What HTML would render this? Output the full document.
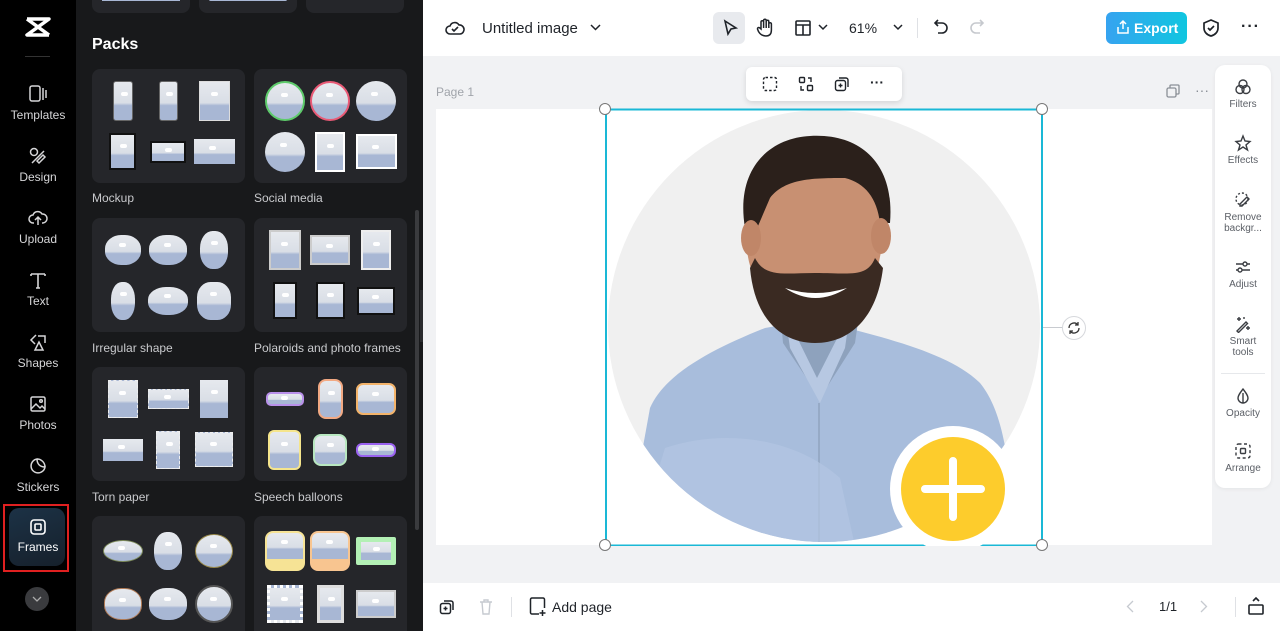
<!DOCTYPE html>
<html style="width:1280px;height:631px;overflow:hidden"><head><meta charset="utf-8"><style>
*{box-sizing:border-box;margin:0;padding:0}
body{width:1280px;height:631px;overflow:hidden;font-family:"Liberation Sans",sans-serif;background:#fff;position:relative}
.abs{position:absolute}
#rail{left:0;top:0;width:76px;height:631px;background:#000}
#panel{left:76px;top:0;width:347px;height:631px;background:#18191b}
.ri{position:absolute;left:0;width:76px;text-align:center;color:#d6d6d8;font-size:12px}
.ri svg{display:block;margin:0 auto 4px}
.card{position:absolute;width:153px;height:114px;background:#25262a;border-radius:8px;display:grid;grid-template-columns:repeat(3,1fr);grid-template-rows:1fr 1fr;padding:6px 8px;align-items:center;justify-items:center}
.lbl{position:absolute;color:#c9cacd;font-size:12px}
.t{background:linear-gradient(180deg,#e6e9ee 0%,#d9dee6 55%,#a8b7d4 62%,#a8b7d4 100%);position:relative}
.t::after{content:"";position:absolute;left:38%;top:28%;width:7px;height:4px;background:#fff;border-radius:3px}
#main{left:423px;top:0;width:857px;height:631px;background:#f1f2f4}
#top{left:423px;top:0;width:857px;height:56px;background:#fff}
#bot{left:423px;top:583px;width:857px;height:48px;background:#fff}
.tx{color:#1f2329}
.rp{position:absolute;left:0;width:56px;text-align:center;font-size:10px;color:#5b5f66;line-height:11px}
.rp svg{display:block;margin:0 auto 3px}
</style></head><body>
<div id="rail" class="abs">
  <svg class="abs" style="left:24px;top:16px" width="28" height="22" viewBox="0 0 28 22"><path d="M3 3h22L3 19h22M3 3l22 16M25 3L3 19" stroke="#fff" stroke-width="3.5" fill="none" stroke-linejoin="round"/></svg>
  <div class="abs" style="left:25px;top:56px;width:25px;height:1px;background:#333"></div>
  <div class="ri" style="top:84px"><svg width="20" height="20" viewBox="0 0 20 20" fill="none" stroke="#d6d6d8" stroke-width="1.5"><rect x="2" y="2" width="10" height="15" rx="2"/><path d="M15 4v12M18 6v8"/></svg>Templates</div>
  <div class="ri" style="top:146px"><svg width="20" height="20" viewBox="0 0 20 20" fill="none" stroke="#d6d6d8" stroke-width="1.5"><circle cx="6" cy="6" r="3.5"/><path d="M4 17l12-12M9 15l6-6 2 2-6 6z"/></svg>Design</div>
  <div class="ri" style="top:208px"><svg width="20" height="20" viewBox="0 0 20 20" fill="none" stroke="#d6d6d8" stroke-width="1.5"><path d="M6 15H5a4 4 0 010-8 5 5 0 019-1 4 4 0 011 9h-1M10 17V9M7 12l3-3 3 3"/></svg>Upload</div>
  <div class="ri" style="top:270px"><svg width="20" height="20" viewBox="0 0 20 20" fill="none" stroke="#d6d6d8" stroke-width="1.6"><path d="M3 4h14M10 4v14M3 4v2M17 4v2M8 18h4"/></svg>Text</div>
  <div class="ri" style="top:332px"><svg width="20" height="20" viewBox="0 0 20 20" fill="none" stroke="#d6d6d8" stroke-width="1.5"><path d="M8 3L3 8l4 4M10 4h7v7M11 10l-4 8h8z"/></svg>Shapes</div>
  <div class="ri" style="top:394px"><svg width="20" height="20" viewBox="0 0 20 20" fill="none" stroke="#d6d6d8" stroke-width="1.5"><rect x="3" y="3" width="14" height="14" rx="1.5"/><path d="M3 15l5-5 4 4 2-2 3 3"/><circle cx="13" cy="7" r="1.3"/></svg>Photos</div>
  <div class="ri" style="top:456px"><svg width="20" height="20" viewBox="0 0 20 20" fill="none" stroke="#d6d6d8" stroke-width="1.5"><path d="M17 11a7 7 0 11-8-8c0 5 3 8 8 8zM9 3a8 8 0 018 8"/></svg>Stickers</div>
  <div class="abs" style="left:3px;top:504px;width:66px;height:68px;border:2px solid #e02020"></div>
  <div class="abs" style="left:9px;top:508px;width:56px;height:58px;border-radius:10px;background:linear-gradient(160deg,#1c3246,#16202b)"></div>
  <div class="ri" style="top:518px;color:#fff"><svg width="18" height="18" viewBox="0 0 18 18" fill="none" stroke="#fff" stroke-width="1.6"><rect x="2" y="2" width="14" height="14" rx="3"/><rect x="6" y="6" width="6" height="6" rx="1"/></svg>Frames</div>
  <div class="abs" style="left:25px;top:587px;width:24px;height:24px;border-radius:50%;background:#3a3b3e"></div>
  <svg class="abs" style="left:32px;top:596px" width="10" height="6"><path d="M1 1l4 4 4-4" stroke="#aaa" fill="none" stroke-width="1.3"/></svg>
</div>
<div id="panel" class="abs">
  <div class="abs" style="left:16px;top:-8px;width:98px;height:21px;background:#25262a;border-radius:8px"></div>
  <div class="abs" style="left:123px;top:-8px;width:98px;height:21px;background:#25262a;border-radius:8px"></div>
  <div class="abs" style="left:230px;top:-8px;width:98px;height:21px;background:#25262a;border-radius:8px"></div>
  <div class="abs" style="left:26px;top:-2px;width:78px;height:3px;background:#a8b7d4"></div>
  <div class="abs" style="left:133px;top:-2px;width:78px;height:3px;background:#a8b7d4;border-radius:3px"></div>
  <div class="abs" style="left:16px;top:36px;color:#fff;font-weight:bold;font-size:16px">Packs</div>
  <div class="abs" style="left:339px;top:210px;width:4px;height:320px;background:#3a3b3e;border-radius:2px"></div>
</div>
<div class="card" style="left:92px;top:69px"><div class="t" style="width:20px;height:40px;border-radius:3px;border:1px solid #666"></div><div class="t" style="width:19px;height:40px;border-radius:3px;border:1px solid #666"></div><div class="t" style="width:31px;height:40px;border:1px solid #ddd"></div><div class="t" style="width:27px;height:37px;border:2px solid #111"></div><div class="t" style="width:36px;height:22px;border:2px solid #111"></div><div class="t" style="width:41px;height:25px"></div></div>
<div class="lbl" style="left:92px;top:191px">Mockup</div>
<div class="card" style="left:254px;top:69px"><div class="t" style="width:40px;height:40px;border-radius:50%;border:2px solid #5ecb6b"></div><div class="t" style="width:40px;height:40px;border-radius:50%;border:2px solid #e95a76"></div><div class="t" style="width:40px;height:40px;border-radius:50%"></div><div class="t" style="width:40px;height:40px;border-radius:50%"></div><div class="t" style="width:30px;height:40px;border:2px solid #fff"></div><div class="t" style="width:41px;height:35px;border:2px solid #fff"></div></div>
<div class="lbl" style="left:254px;top:191px">Social media</div>
<div class="card" style="left:92px;top:218px"><div class="t" style="width:36px;height:30px;border-radius:45%"></div><div class="t" style="width:38px;height:30px;border-radius:45%"></div><div class="t" style="width:28px;height:38px;border-radius:45%"></div><div class="t" style="width:24px;height:38px;border-radius:45%"></div><div class="t" style="width:40px;height:28px;border-radius:45%"></div><div class="t" style="width:34px;height:38px;border-radius:40%"></div></div>
<div class="lbl" style="left:92px;top:341px">Irregular shape</div>
<div class="card" style="left:254px;top:218px"><div class="t" style="width:32px;height:40px;border:2px solid #ccc"></div><div class="t" style="width:40px;height:30px;border:2px solid #ccc"></div><div class="t" style="width:30px;height:40px;border:2px solid #eee"></div><div class="t" style="width:24px;height:37px;border:2px solid #111"></div><div class="t" style="width:29px;height:37px;border:2px solid #111"></div><div class="t" style="width:38px;height:28px;border:2px solid #111"></div></div>
<div class="lbl" style="left:254px;top:341px">Polaroids and photo frames</div>
<div class="card" style="left:92px;top:367px"><div class="t" style="width:30px;height:38px;border:1px dashed #eee"></div><div class="t" style="width:41px;height:20px;border:1px dashed #eee"></div><div class="t" style="width:28px;height:38px"></div><div class="t" style="width:40px;height:22px"></div><div class="t" style="width:24px;height:38px;border:1px dashed #eee"></div><div class="t" style="width:38px;height:35px;border:1px dashed #eee"></div></div>
<div class="lbl" style="left:92px;top:490px">Torn paper</div>
<div class="card" style="left:254px;top:367px"><div class="t" style="width:38px;height:14px;border-radius:5px;border:2px solid #b990ea"></div><div class="t" style="width:25px;height:40px;border-radius:8px;border:2px solid #f2a983"></div><div class="t" style="width:40px;height:32px;border-radius:7px;border:2px solid #f3b36a"></div><div class="t" style="width:33px;height:40px;border-radius:6px;border:2px solid #f5e58c"></div><div class="t" style="width:34px;height:32px;border-radius:8px;border:2px solid #b8e7c0"></div><div class="t" style="width:40px;height:14px;border-radius:6px;border:2px solid #9a62f0"></div></div>
<div class="lbl" style="left:254px;top:490px">Speech balloons</div>
<div class="card" style="left:92px;top:516px;height:115px;border-radius:8px 8px 0 0;padding:8px 8px 0"><div class="t" style="width:40px;height:22px;border-radius:50%;border:1px solid #7c8a5a"></div><div class="t" style="width:28px;height:38px;border-radius:45%"></div><div class="t" style="width:38px;height:34px;border-radius:50%;border:1px solid #9a8a4a"></div><div class="t" style="width:38px;height:32px;border-radius:45%;border:1px solid #b07a55"></div><div class="t" style="width:38px;height:32px;border-radius:45%"></div><div class="t" style="width:38px;height:38px;border-radius:50%;border:2px solid #555"></div></div>
<div class="card" style="left:254px;top:516px;height:115px;border-radius:8px 8px 0 0;padding:8px 8px 0"><div class="t" style="width:40px;height:40px;border-radius:8px;border:2px solid #f6e395;border-bottom:12px solid #f6e395"></div><div class="t" style="width:40px;height:40px;border-radius:8px;border:2px solid #f8c590;border-bottom:12px solid #f8c590"></div><div class="t" style="width:40px;height:28px;border:5px solid #b3f0b5;border-radius:2px"></div><div class="t" style="width:36px;height:38px;border:3px dotted #fff"></div><div class="t" style="width:27px;height:38px;border:3px solid #ddd"></div><div class="t" style="width:40px;height:28px;border:2px solid #ccc"></div></div>
<div class="abs" style="left:420px;top:290px;width:9px;height:52px;background:#2a2b2e;border-radius:0 6px 6px 0"></div>
<div id="main" class="abs"></div>
<div id="top" class="abs">
  <svg class="abs" style="left:22px;top:18px" width="20" height="20" viewBox="0 0 20 20" fill="none" stroke="#1f2329" stroke-width="1.6"><path d="M6 16H5a4 4 0 010-8 5 5 0 019-1 4 4 0 011 9H6z"/><path d="M7 11l2 2 4-4"/></svg>
  <div class="abs tx" style="left:59px;top:20px;font-size:15px">Untitled image</div>
  <svg class="abs" style="left:167px;top:24px" width="11" height="7"><path d="M1 1l4.5 4.5L10 1" stroke="#1f2329" fill="none" stroke-width="1.5"/></svg>
  <div class="abs" style="left:290px;top:12px;width:32px;height:32px;background:#e8eaee;border-radius:6px"></div>
  <svg class="abs" style="left:298px;top:19px" width="18" height="18" viewBox="0 0 18 18" fill="none" stroke="#1f2329" stroke-width="1.6"><path d="M4 2l11 7-5 1-3 5z"/></svg>
  <svg class="abs" style="left:333px;top:18px" width="18" height="20" viewBox="0 0 18 20" fill="none" stroke="#1f2329" stroke-width="1.5"><path d="M5 11V4a1.3 1.3 0 012.6 0v6V2.5a1.3 1.3 0 012.6 0V10V3.5a1.3 1.3 0 012.6 0V10V6a1.3 1.3 0 012.6 0v6c0 4-2 6-5.5 6S4 16 2.5 13.5L1.5 11a1.3 1.3 0 012.3-1z"/></svg>
  <svg class="abs" style="left:371px;top:19px" width="18" height="18" viewBox="0 0 18 18" fill="none" stroke="#1f2329" stroke-width="1.6"><rect x="2" y="2" width="14" height="14" rx="1"/><path d="M2 6h14M9 6v10"/></svg>
  <svg class="abs" style="left:395px;top:24px" width="10" height="7"><path d="M1 1l4 4 4-4" stroke="#1f2329" fill="none" stroke-width="1.5"/></svg>
  <div class="abs tx" style="left:426px;top:20px;font-size:14px">61%</div>
  <svg class="abs" style="left:470px;top:24px" width="10" height="7"><path d="M1 1l4 4 4-4" stroke="#1f2329" fill="none" stroke-width="1.5"/></svg>
  <div class="abs" style="left:494px;top:18px;width:1px;height:20px;background:#dfe1e5"></div>
  <svg class="abs" style="left:509px;top:18px" width="18" height="18" viewBox="0 0 18 18" fill="none" stroke="#1f2329" stroke-width="1.6"><path d="M6 2L3 5l3 3M3 5h7a5 5 0 010 10H6"/></svg>
  <svg class="abs" style="left:545px;top:18px" width="18" height="18" viewBox="0 0 18 18" fill="none" stroke="#c6c9ce" stroke-width="1.6"><path d="M12 2l3 3-3 3M15 5H8a5 5 0 000 10h4"/></svg>
  <div class="abs" style="left:683px;top:12px;width:81px;height:32px;border-radius:6px;background:linear-gradient(90deg,#36a3f0,#10c6e0);color:#fff;font-size:14px;font-weight:bold;padding:8px 0 0 28px">Export</div>
  <svg class="abs" style="left:693px;top:19px" width="14" height="16" viewBox="0 0 14 16" fill="none" stroke="#fff" stroke-width="1.5"><path d="M7 10V2M4 5l3-3 3 3M2 8v6h10V8"/></svg>
  <svg class="abs" style="left:779px;top:18px" width="18" height="20" viewBox="0 0 18 20" fill="none" stroke="#1f2329" stroke-width="1.7"><path d="M9 2l7 3v5c0 4-3 7-7 8-4-1-7-4-7-8V5z"/><path d="M6 10l2 2 4-4"/></svg>
  <div class="abs tx" style="left:818px;top:18px;font-size:16px;font-weight:bold;letter-spacing:1px">···</div>
</div>
<div class="abs" style="left:436px;top:85px;color:#a0a4aa;font-size:12px">Page 1</div>
<svg class="abs" style="left:1166px;top:84px" width="14" height="14" viewBox="0 0 14 14" fill="none" stroke="#8a8f96" stroke-width="1.3"><rect x="1" y="4" width="9" height="9" rx="1.5"/><path d="M4 4V2a1 1 0 011-1h7a1 1 0 011 1v7a1 1 0 01-1 1h-2"/></svg>
<div class="abs" style="left:1195px;top:82px;color:#8a8f96;font-size:14px">···</div>
<div class="abs" style="left:436px;top:109px;width:776px;height:436px;background:#fff"></div>
<svg class="abs" style="left:605px;top:108px" width="438" height="438" viewBox="0 0 438 438">
<defs><clipPath id="c"><circle cx="219" cy="218" r="216"/></clipPath></defs>
<g clip-path="url(#c)">
<rect width="438" height="438" fill="#f0f0f0"/>
<path d="M20 438 L45 300 C60 265 110 240 160 220 L205 212 L250 222 C300 235 350 250 375 275 C395 300 405 340 410 438Z" fill="#a8bddc"/>
<path d="M175 200 L178 235 L215 290 L250 235 L255 200Z" fill="#8ea2bd"/>
<path d="M180 205 L212 270 L245 205 L240 240 L215 295 L185 240Z" fill="#b7c8e2"/>
<path d="M214 295 L214 438" stroke="#96aac6" stroke-width="2"/>
<path d="M60 340 C120 320 190 330 235 370 L250 438 L30 438Z" fill="#b3c6e2" opacity=".7"/>
<ellipse cx="209" cy="128" rx="68" ry="88" fill="#c89072"/>
<path d="M145 160 C150 215 180 235 210 235 C245 235 272 210 278 160 L270 150 C262 170 245 165 210 165 C180 165 160 170 150 150Z" fill="#3a2a22"/>
<path d="M180 180 Q210 200 242 180 Q210 190 180 180Z" fill="#fff"/>
<path d="M140 120 C130 60 165 30 205 28 C255 25 290 55 285 115 L275 115 C272 90 260 75 240 70 C210 70 180 70 165 90 L150 125Z" fill="#2b201b"/>
<ellipse cx="146" cy="130" rx="10" ry="18" fill="#c08668"/>
<ellipse cx="276" cy="128" rx="10" ry="18" fill="#c08668"/>
</g>
<rect x="1" y="1.5" width="436" height="436" fill="none" stroke="#1ab8d6" stroke-width="2"/>
<circle cx="348" cy="381" r="63" fill="#fff"/>
<circle cx="348" cy="381" r="52" fill="#fdcc2c"/>
<path d="M348 353v56M320 381h56" stroke="#fff" stroke-width="8" stroke-linecap="round"/>
</svg>
<div class="abs" style="left:599px;top:103px;width:12px;height:12px;border-radius:50%;background:#fff;border:1px solid #777"></div>
<div class="abs" style="left:1036px;top:103px;width:12px;height:12px;border-radius:50%;background:#fff;border:1px solid #777"></div>
<div class="abs" style="left:599px;top:539px;width:12px;height:12px;border-radius:50%;background:#fff;border:1px solid #777"></div>
<div class="abs" style="left:1036px;top:539px;width:12px;height:12px;border-radius:50%;background:#fff;border:1px solid #777"></div>
<div class="abs" style="left:1043px;top:327px;width:20px;height:1px;background:#c8cbd0"></div>
<div class="abs" style="left:1062px;top:316px;width:24px;height:24px;border-radius:50%;background:#fff;border:1px solid #d6d8dc"></div>
<svg class="abs" style="left:1067px;top:321px" width="14" height="14" viewBox="0 0 14 14" fill="none" stroke="#333" stroke-width="1.3"><path d="M2 7a5 5 0 019-3M12 7a5 5 0 01-9 3M11 1v3H8M3 13v-3h3"/></svg>
<div class="abs" style="left:746px;top:67px;width:156px;height:34px;background:#fff;border-radius:6px;box-shadow:0 2px 6px rgba(0,0,0,.12)"></div>
<svg class="abs" style="left:762px;top:76px" width="16" height="16" viewBox="0 0 16 16" fill="none" stroke="#1f2329" stroke-width="1.4" stroke-dasharray="2.5 2"><rect x="1.5" y="1.5" width="13" height="13" rx="2"/></svg>
<svg class="abs" style="left:798px;top:76px" width="16" height="16" viewBox="0 0 16 16" fill="none" stroke="#1f2329" stroke-width="1.4"><rect x="1.5" y="1.5" width="5" height="5" rx="1"/><rect x="9.5" y="9.5" width="5" height="5" rx="1"/><path d="M10 2h3v4M6 14H3v-4"/></svg>
<svg class="abs" style="left:834px;top:76px" width="16" height="16" viewBox="0 0 16 16" fill="none" stroke="#1f2329" stroke-width="1.4"><rect x="1.5" y="4.5" width="10" height="10" rx="2"/><path d="M5 2h7a2 2 0 012 2v7M6.5 7.5v4M4.5 9.5h4"/></svg>
<div class="abs tx" style="left:870px;top:74px;font-size:14px;font-weight:bold">···</div>
<div class="abs" style="left:1215px;top:65px;width:56px;height:423px;background:#fff;border-radius:10px;box-shadow:0 1px 4px rgba(0,0,0,.06)">
  <div class="rp" style="top:13px"><svg width="18" height="18" viewBox="0 0 18 18" fill="none" stroke="#3a3d42" stroke-width="1.4"><circle cx="9" cy="6" r="4"/><circle cx="6" cy="11.5" r="4"/><circle cx="12" cy="11.5" r="4"/></svg>Filters</div>
  <div class="rp" style="top:69px"><svg width="18" height="18" viewBox="0 0 18 18" fill="none" stroke="#3a3d42" stroke-width="1.4"><path d="M9 2l2 5 5 .5-4 3.5 1.5 5L9 13l-4.5 3L6 11 2 7.5 7 7z"/></svg>Effects</div>
  <div class="rp" style="top:126px"><svg width="18" height="18" viewBox="0 0 18 18" fill="none" stroke="#3a3d42" stroke-width="1.4"><circle cx="8" cy="8" r="6" stroke-dasharray="2 2"/><path d="M6 13l7-7 2 2-7 7-2 0z"/></svg>Remove<br>backgr...</div>
  <div class="rp" style="top:193px"><svg width="18" height="18" viewBox="0 0 18 18" fill="none" stroke="#3a3d42" stroke-width="1.4"><path d="M2 6h14M2 12h14"/><circle cx="11" cy="6" r="2" fill="#fff"/><circle cx="6" cy="12" r="2" fill="#fff"/></svg>Adjust</div>
  <div class="rp" style="top:250px"><svg width="18" height="18" viewBox="0 0 18 18" fill="none" stroke="#3a3d42" stroke-width="1.4"><path d="M3 16L12 7l1.5 1.5L4.5 17.5zM5 2v4M3 4h4M14 11v4M12 13h4M10 2v2"/></svg>Smart<br>tools</div>
  <div class="abs" style="left:6px;top:308px;width:44px;height:1px;background:#e6e8eb"></div>
  <div class="rp" style="top:322px"><svg width="18" height="18" viewBox="0 0 18 18" fill="none" stroke="#3a3d42" stroke-width="1.4"><path d="M9 2c3 4 5 6.5 5 9a5 5 0 01-10 0c0-2.5 2-5 5-9zM9 6v10"/></svg>Opacity</div>
  <div class="rp" style="top:377px"><svg width="18" height="18" viewBox="0 0 18 18" fill="none" stroke="#3a3d42" stroke-width="1.4"><rect x="2" y="2" width="14" height="14" rx="2.5" stroke-dasharray="3 2.5"/><rect x="6.5" y="6.5" width="5" height="5" rx="1"/></svg>Arrange</div>
</div>
<div id="bot" class="abs">
  <svg class="abs" style="left:16px;top:16px" width="16" height="16" viewBox="0 0 16 16" fill="none" stroke="#1f2329" stroke-width="1.5"><rect x="1.5" y="4.5" width="10" height="10" rx="2"/><path d="M5 2h7a2 2 0 012 2v7M6.5 7.5v4M4.5 9.5h4"/></svg>
  <svg class="abs" style="left:56px;top:16px" width="14" height="16" viewBox="0 0 14 16" fill="none" stroke="#c6cad0" stroke-width="1.4"><path d="M1 3h12M5 3V1h4v2M3 3l1 12h6l1-12"/></svg>
  <div class="abs" style="left:88px;top:14px;width:1px;height:20px;background:#dfe1e5"></div>
  <svg class="abs" style="left:106px;top:14px" width="18" height="20" viewBox="0 0 18 20" fill="none" stroke="#1f2329" stroke-width="1.5"><path d="M10 17H3a1.5 1.5 0 01-1.5-1.5v-13A1.5 1.5 0 013 1h11a1.5 1.5 0 011.5 1.5V11M13.5 13v6M10.5 16h6"/></svg>
  <div class="abs tx" style="left:129px;top:16px;font-size:14px">Add page</div>
  <svg class="abs" style="left:703px;top:17px" width="8" height="13"><path d="M7 1L1.5 6.5 7 12" stroke="#c6cad0" fill="none" stroke-width="1.3"/></svg>
  <div class="abs tx" style="left:736px;top:16px;font-size:13px">1/1</div>
  <svg class="abs" style="left:777px;top:17px" width="8" height="13"><path d="M1 1l5.5 5.5L1 12" stroke="#c6cad0" fill="none" stroke-width="1.3"/></svg>
  <div class="abs" style="left:812px;top:14px;width:1px;height:20px;background:#dfe1e5"></div>
  <svg class="abs" style="left:824px;top:13px" width="18" height="20" viewBox="0 0 18 20" fill="none" stroke="#1f2329" stroke-width="1.6"><path d="M6 5l3-3 3 3"/><rect x="2" y="9" width="14" height="9" rx="1"/></svg>
</div>
</body></html>
